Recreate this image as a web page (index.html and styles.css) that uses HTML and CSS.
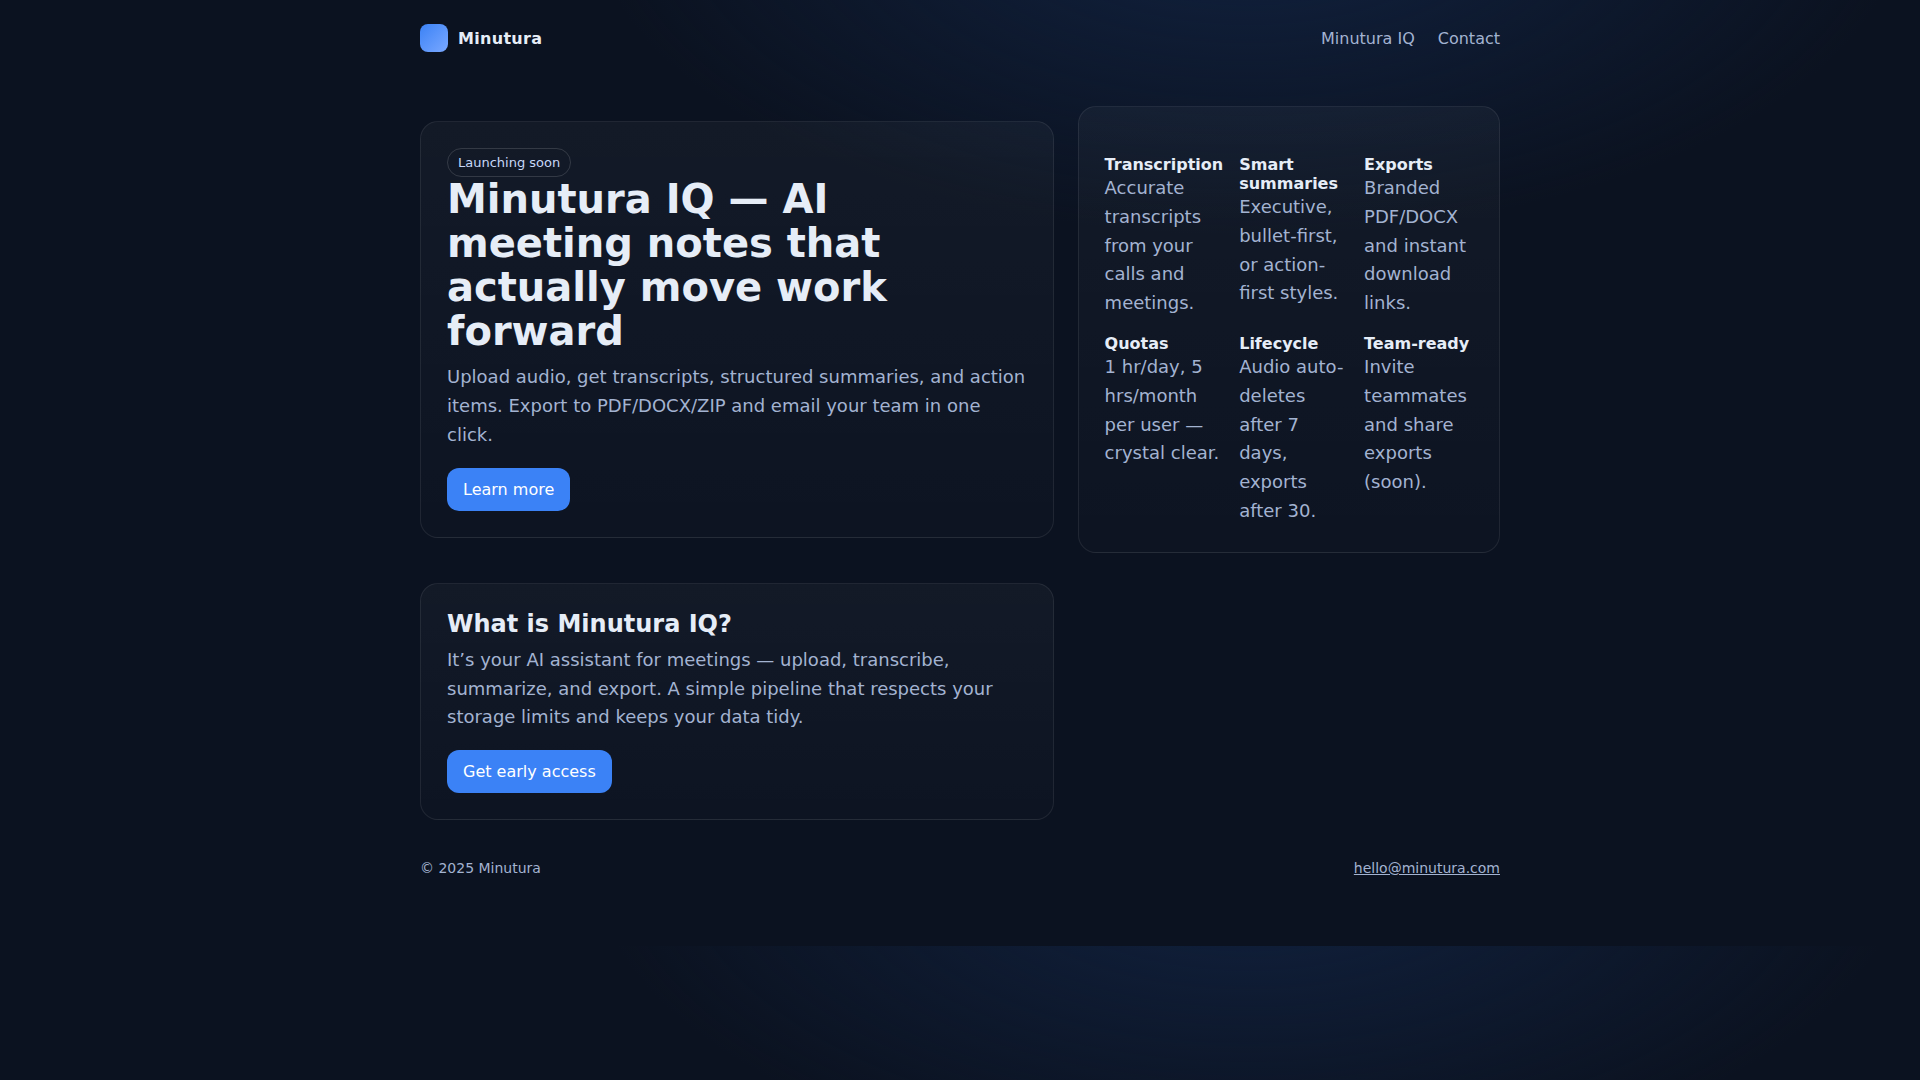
FILE: index.html
```html
<!DOCTYPE html>
<html lang="en">
<head>
  <meta charset="UTF-8" />
  <meta name="viewport" content="width=device-width, initial-scale=1.0" />
  <title>Minutura</title>
  <link rel="stylesheet" href="styles.css">
</head>
<body>
  <div class="container">
    <header class="nav">
      <div class="brand">
        <div class="logo"></div>
        <span>Minutura</span>
      </div>
      <nav class="links">
        <a href="#iq">Minutura IQ</a>
        <a href="#contact">Contact</a>
      </nav>
    </header>

    <main>
      <section class="hero">
        <div class="card">
          <span class="badge">Launching soon</span>
          <h1>Minutura IQ — AI meeting notes that actually move work forward</h1>
          <p>Upload audio, get transcripts, structured summaries, and action items. Export to PDF/DOCX/ZIP and email your team in one click.</p>
          <a class="btn" href="#iq">Learn more</a>
        </div>
        <div class="card">
          <div class="features">
            <div class="feature"><strong>Transcription</strong><p>Accurate transcripts from your calls and meetings.</p></div>
            <div class="feature"><strong>Smart summaries</strong><p>Executive, bullet-first, or action-first styles.</p></div>
            <div class="feature"><strong>Exports</strong><p>Branded PDF/DOCX and instant download links.</p></div>
            <div class="feature"><strong>Quotas</strong><p>1 hr/day, 5 hrs/month per user — crystal clear.</p></div>
            <div class="feature"><strong>Lifecycle</strong><p>Audio auto-deletes after 7 days, exports after 30.</p></div>
            <div class="feature"><strong>Team-ready</strong><p>Invite teammates and share exports (soon).</p></div>
          </div>
        </div>
      </section>

      <section id="iq" class="hero">
        <div class="card">
          <h2>What is Minutura IQ?</h2>
          <p>It’s your AI assistant for meetings — upload, transcribe, summarize, and export. A simple pipeline that respects your storage limits and keeps your data tidy.</p>
          <a class="btn" href="#contact">Get early access</a>
        </div>
      </section>
    </main>

    <footer id="contact" class="footer">
      <div>© 2025 Minutura</div>
      <a href="mailto:hello@minutura.com">hello@minutura.com</a>
    </footer>
  </div>
</body>
</html>
```
FILE: styles.css
```css
:root {
  --bg: #0b1220;
  --text: #e6edf7;
  --muted: #a3b3d1;
  --accent: #3b82f6;
  --line: rgba(255, 255, 255, 0.08);
}
* {
  box-sizing: border-box;
}
body {
  margin: 0;
  font-family: "DejaVu Sans", sans-serif;
  color: var(--text);
  background: radial-gradient(1200px 600px at 65% -10%, #112240 0%, transparent 55%), var(--bg);
}
.container {
  max-width: 1128px;
  margin: 0 auto;
  padding: 24px 24px 70px;
}
.nav {
  display: flex;
  align-items: center;
  justify-content: space-between;
}
.brand {
  display: flex;
  align-items: center;
  gap: 10px;
  font-weight: 700;
  letter-spacing: 0.3px;
}
.logo {
  width: 28px;
  height: 28px;
  border-radius: 8px;
  background: linear-gradient(135deg, #3b82f6, #7aa8ff);
}
.links {
  display: flex;
  gap: 23px;
}
.links a {
  color: var(--muted);
  text-decoration: none;
}
main {
  padding-top: 54px;
}
.hero {
  display: grid;
  grid-template-columns: 3fr 2fr;
  gap: 24px;
  align-items: center;
  margin-bottom: 30px;
}
.card {
  padding: 26px;
  border: 1px solid var(--line);
  border-radius: 18px;
  background: linear-gradient(180deg, rgba(255, 255, 255, 0.035), rgba(255, 255, 255, 0.01));
}
.badge {
  display: inline-block;
  padding: 6px 10px;
  border: 1px solid rgba(255, 255, 255, 0.14);
  border-radius: 999px;
  font-size: 13px;
  color: #c7d7f7;
}
h1 {
  margin: 0 0 10px;
  font-size: 40px;
  line-height: 1.1;
}
h2 {
  margin: 0 0 8px;
  font-size: 24px;
}
p {
  margin: 0;
  font-size: 18px;
  line-height: 1.6;
  color: var(--muted);
}
.btn {
  display: inline-block;
  margin-top: 18px;
  padding: 12px 16px;
  border-radius: 12px;
  background: var(--accent);
  color: #fff;
  text-decoration: none;
}
.features {
  display: grid;
  grid-template-columns: repeat(3, 1fr);
  gap: 16px;
  margin-top: 22px;
}
.feature strong {
  display: block;
}
.footer {
  display: flex;
  justify-content: space-between;
  padding-top: 10px;
  font-size: 14px;
  color: var(--muted);
}
.footer a {
  color: inherit;
}
```
